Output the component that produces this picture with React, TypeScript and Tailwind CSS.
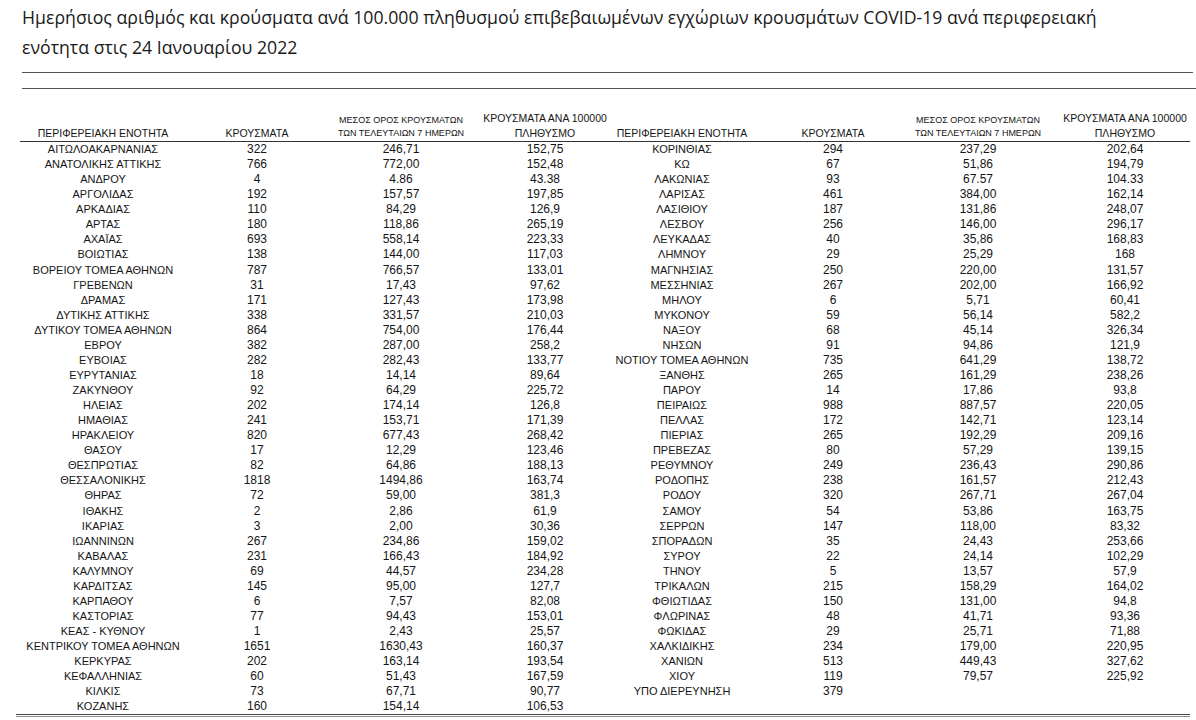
type Row = [string, string, string, string];

const leftRows: Row[] = [
  ["ΑΙΤΩΛΟΑΚΑΡΝΑΝΙΑΣ", "322", "246,71", "152,75"],
  ["ΑΝΑΤΟΛΙΚΗΣ ΑΤΤΙΚΗΣ", "766", "772,00", "152,48"],
  ["ΑΝΔΡΟΥ", "4", "4.86", "43.38"],
  ["ΑΡΓΟΛΙΔΑΣ", "192", "157,57", "197,85"],
  ["ΑΡΚΑΔΙΑΣ", "110", "84,29", "126,9"],
  ["ΑΡΤΑΣ", "180", "118,86", "265,19"],
  ["ΑΧΑΪΑΣ", "693", "558,14", "223,33"],
  ["ΒΟΙΩΤΙΑΣ", "138", "144,00", "117,03"],
  ["ΒΟΡΕΙΟΥ ΤΟΜΕΑ ΑΘΗΝΩΝ", "787", "766,57", "133,01"],
  ["ΓΡΕΒΕΝΩΝ", "31", "17,43", "97,62"],
  ["ΔΡΑΜΑΣ", "171", "127,43", "173,98"],
  ["ΔΥΤΙΚΗΣ ΑΤΤΙΚΗΣ", "338", "331,57", "210,03"],
  ["ΔΥΤΙΚΟΥ ΤΟΜΕΑ ΑΘΗΝΩΝ", "864", "754,00", "176,44"],
  ["ΕΒΡΟΥ", "382", "287,00", "258,2"],
  ["ΕΥΒΟΙΑΣ", "282", "282,43", "133,77"],
  ["ΕΥΡΥΤΑΝΙΑΣ", "18", "14,14", "89,64"],
  ["ΖΑΚΥΝΘΟΥ", "92", "64,29", "225,72"],
  ["ΗΛΕΙΑΣ", "202", "174,14", "126,8"],
  ["ΗΜΑΘΙΑΣ", "241", "153,71", "171,39"],
  ["ΗΡΑΚΛΕΙΟΥ", "820", "677,43", "268,42"],
  ["ΘΑΣΟΥ", "17", "12,29", "123,46"],
  ["ΘΕΣΠΡΩΤΙΑΣ", "82", "64,86", "188,13"],
  ["ΘΕΣΣΑΛΟΝΙΚΗΣ", "1818", "1494,86", "163,74"],
  ["ΘΗΡΑΣ", "72", "59,00", "381,3"],
  ["ΙΘΑΚΗΣ", "2", "2,86", "61,9"],
  ["ΙΚΑΡΙΑΣ", "3", "2,00", "30,36"],
  ["ΙΩΑΝΝΙΝΩΝ", "267", "234,86", "159,02"],
  ["ΚΑΒΑΛΑΣ", "231", "166,43", "184,92"],
  ["ΚΑΛΥΜΝΟΥ", "69", "44,57", "234,28"],
  ["ΚΑΡΔΙΤΣΑΣ", "145", "95,00", "127,7"],
  ["ΚΑΡΠΑΘΟΥ", "6", "7,57", "82,08"],
  ["ΚΑΣΤΟΡΙΑΣ", "77", "94,43", "153,01"],
  ["ΚΕΑΣ - ΚΥΘΝΟΥ", "1", "2,43", "25,57"],
  ["ΚΕΝΤΡΙΚΟΥ ΤΟΜΕΑ ΑΘΗΝΩΝ", "1651", "1630,43", "160,37"],
  ["ΚΕΡΚΥΡΑΣ", "202", "163,14", "193,54"],
  ["ΚΕΦΑΛΛΗΝΙΑΣ", "60", "51,43", "167,59"],
  ["ΚΙΛΚΙΣ", "73", "67,71", "90,77"],
  ["ΚΟΖΑΝΗΣ", "160", "154,14", "106,53"],
];

const rightRows: Row[] = [
  ["ΚΟΡΙΝΘΙΑΣ", "294", "237,29", "202,64"],
  ["ΚΩ", "67", "51,86", "194,79"],
  ["ΛΑΚΩΝΙΑΣ", "93", "67.57", "104.33"],
  ["ΛΑΡΙΣΑΣ", "461", "384,00", "162,14"],
  ["ΛΑΣΙΘΙΟΥ", "187", "131,86", "248,07"],
  ["ΛΕΣΒΟΥ", "256", "146,00", "296,17"],
  ["ΛΕΥΚΑΔΑΣ", "40", "35,86", "168,83"],
  ["ΛΗΜΝΟΥ", "29", "25,29", "168"],
  ["ΜΑΓΝΗΣΙΑΣ", "250", "220,00", "131,57"],
  ["ΜΕΣΣΗΝΙΑΣ", "267", "202,00", "166,92"],
  ["ΜΗΛΟΥ", "6", "5,71", "60,41"],
  ["ΜΥΚΟΝΟΥ", "59", "56,14", "582,2"],
  ["ΝΑΞΟΥ", "68", "45,14", "326,34"],
  ["ΝΗΣΩΝ", "91", "94,86", "121,9"],
  ["ΝΟΤΙΟΥ ΤΟΜΕΑ ΑΘΗΝΩΝ", "735", "641,29", "138,72"],
  ["ΞΑΝΘΗΣ", "265", "161,29", "238,26"],
  ["ΠΑΡΟΥ", "14", "17,86", "93,8"],
  ["ΠΕΙΡΑΙΩΣ", "988", "887,57", "220,05"],
  ["ΠΕΛΛΑΣ", "172", "142,71", "123,14"],
  ["ΠΙΕΡΙΑΣ", "265", "192,29", "209,16"],
  ["ΠΡΕΒΕΖΑΣ", "80", "57,29", "139,15"],
  ["ΡΕΘΥΜΝΟΥ", "249", "236,43", "290,86"],
  ["ΡΟΔΟΠΗΣ", "238", "161,57", "212,43"],
  ["ΡΟΔΟΥ", "320", "267,71", "267,04"],
  ["ΣΑΜΟΥ", "54", "53,86", "163,75"],
  ["ΣΕΡΡΩΝ", "147", "118,00", "83,32"],
  ["ΣΠΟΡΑΔΩΝ", "35", "24,43", "253,66"],
  ["ΣΥΡΟΥ", "22", "24,14", "102,29"],
  ["ΤΗΝΟΥ", "5", "13,57", "57,9"],
  ["ΤΡΙΚΑΛΩΝ", "215", "158,29", "164,02"],
  ["ΦΘΙΩΤΙΔΑΣ", "150", "131,00", "94,8"],
  ["ΦΛΩΡΙΝΑΣ", "48", "41,71", "93,36"],
  ["ΦΩΚΙΔΑΣ", "29", "25,71", "71,88"],
  ["ΧΑΛΚΙΔΙΚΗΣ", "234", "179,00", "220,95"],
  ["ΧΑΝΙΩΝ", "513", "449,43", "327,62"],
  ["ΧΙΟΥ", "119", "79,57", "225,92"],
  ["ΥΠΟ ΔΙΕΡΕΥΝΗΣΗ", "379", "", ""],
];

function Header({ cols }: { cols: string }) {
  return (
    <div className={`grid ${cols} h-[52px] items-end pb-[1px]`}>
      <div className="flex justify-center whitespace-nowrap text-[10.5px] leading-[14px]">
        ΠΕΡΙΦΕΡΕΙΑΚΗ ΕΝΟΤΗΤΑ
      </div>
      <div className="flex justify-center whitespace-nowrap text-[10.5px] leading-[14px]">
        ΚΡΟΥΣΜΑΤΑ
      </div>
      <div className="flex flex-col items-center whitespace-nowrap text-[9px] leading-[12px]">
        <span>ΜΕΣΟΣ ΟΡΟΣ ΚΡΟΥΣΜΑΤΩΝ</span>
        <span className="leading-[14px]">ΤΩΝ ΤΕΛΕΥΤΑΙΩΝ 7 ΗΜΕΡΩΝ</span>
      </div>
      <div className="flex flex-col items-center whitespace-nowrap text-[10.5px]">
        <span className="leading-[14px] pb-[1px]">ΚΡΟΥΣΜΑΤΑ ΑΝΑ 100000</span>
        <span className="leading-[14px]">ΠΛΗΘΥΣΜΟ</span>
      </div>
    </div>
  );
}

function Body({ rows, cols }: { rows: Row[]; cols: string }) {
  return (
    <div className="flex flex-col">
      {rows.map((r) => (
        <div key={r[0]} className={`grid ${cols} h-[15.07px] items-center`}>
          {r.map((cell, i) => (
            <div
              key={i}
              className={
                i === 0
                  ? "flex justify-center whitespace-nowrap text-[11px] leading-[15px]"
                  : "flex justify-center whitespace-nowrap text-[12px] leading-[15px]"
              }
            >
              {cell}
            </div>
          ))}
        </div>
      ))}
    </div>
  );
}

export default function App() {
  const leftCols = "grid-cols-[154px_154px_134px_154px]";
  const rightCols = "grid-cols-[120px_182px_108px_186px]";

  return (
    <div className="w-[1196px] h-[720px] overflow-hidden bg-white text-[#222]">
      {/* title */}
      <div className="pl-[22px] pt-[2px] text-[17.7px] leading-[30px] text-[#1a1a1a] font-['Open_Sans','Noto_Sans',sans-serif]">
        <p className="whitespace-nowrap">
          Ημερήσιος αριθμός και κρούσματα ανά 100.000 πληθυσμού επιβεβαιωμένων εγχώριων κρουσμάτων COVID-19 ανά περιφερειακή
        </p>
        <p>ενότητα στις 24 Ιανουαρίου 2022</p>
      </div>

      <div className="ml-[22px] mt-[10px] h-px w-[1171px] bg-[#555]" />
      <div className="ml-[22px] mt-[15px] h-px bg-[#555]" />

      {/* table */}
      <div className="font-['Liberation_Sans_Narrow','Liberation_Sans',sans-serif] text-[#151515]">
        <div className="flex pl-[26px]">
          <Header cols={leftCols} />
          <Header cols={rightCols} />
        </div>
        <div className="ml-[20px] h-px w-[1170px] bg-[#333]" />
        <div className="flex pl-[26px]">
          <Body rows={leftRows} cols={leftCols} />
          <Body rows={rightRows} cols={rightCols} />
        </div>
        <div className="ml-[16px] h-px w-[1174px] bg-[#444]" />
        <div className="ml-[16px] mt-px h-px w-[1174px] bg-[#888]" />
      </div>
    </div>
  );
}
